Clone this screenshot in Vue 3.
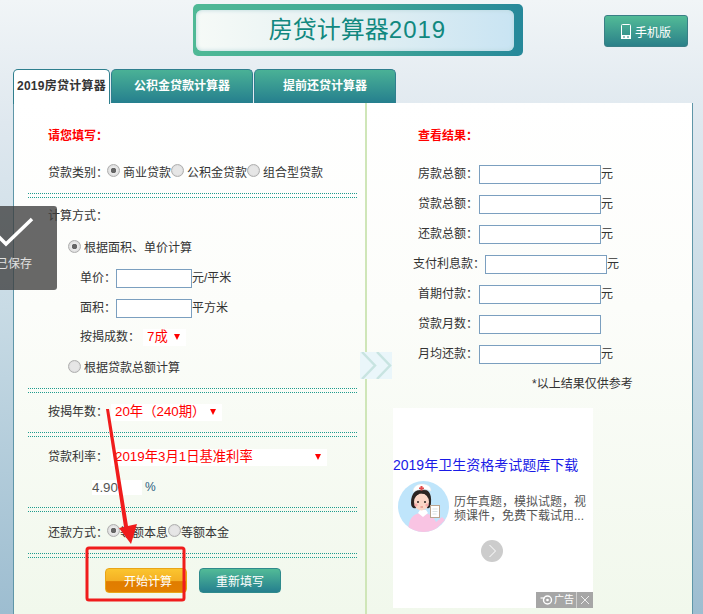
<template>
  <div class="page">
    <header class="top">
      <div class="title-frame"><h1 class="title">房贷计算器<span class="year">2019</span></h1></div>
      <button class="mobile-btn" type="button">
        <svg class="phone" viewBox="0 0 10 15" width="10" height="15" aria-hidden="true">
          <rect x="0.5" y="0.5" width="9" height="14" rx="1" fill="none" stroke="#fff" />
          <rect x="0" y="11" width="10" height="4" fill="#fff" />
          <rect x="2" y="12.5" width="2" height="1" fill="#2f8a8c" />
          <rect x="6" y="12.5" width="2" height="1" fill="#2f8a8c" />
        </svg>
        手机版
      </button>
    </header>

    <nav class="tabs">
      <div v-for="(t, i) in tabs" :key="t" class="tab" :class="{ active: i === 0 }">{{ t }}</div>
    </nav>

    <main class="panel">
      <section class="col left">
        <div class="heading">请您填写：</div>

        <div class="line type-row">
          <span class="lbl">贷款类别：</span>
          <label v-for="o in loanTypes" :key="o" class="opt">
            <input v-model="loanType" class="radio" type="radio" :value="o" />{{ o }}
          </label>
        </div>
        <div class="rule r1"></div>

        <div class="line method">计算方式：</div>
        <label class="line calc-opt c1">
          <input v-model="calc" class="radio" type="radio" value="a" />根据面积、单价计算
        </label>
        <div class="line sub"><span class="sub-lbl">单价：</span><input class="field short" type="text" />元/平米</div>
        <div class="line sub"><span class="sub-lbl">面积：</span><input class="field short" type="text" />平方米</div>
        <div class="line sub ratio">
          <span class="ratio-lbl">按揭成数：</span>
          <div class="pick pick-ratio"><span>7成</span><i class="tri"></i></div>
        </div>
        <label class="line calc-opt c2">
          <input v-model="calc" class="radio" type="radio" value="b" />根据贷款总额计算
        </label>
        <div class="rule r2"></div>

        <div class="line years">
          <span class="lbl">按揭年数：</span>
          <div class="pick pick-years"><span>20年（240期）</span><i class="tri"></i></div>
        </div>
        <div class="rule r1"></div>

        <div class="line rate">
          <span class="lbl">贷款利率：</span>
          <div class="pick pick-rate"><span>2019年3月1日基准利率</span><i class="tri"></i></div>
        </div>
        <div class="line percent">
          <input class="rate-val" type="text" value="4.90" /><span class="pct">%</span>
        </div>
        <div class="rule r1"></div>

        <div class="line repay">
          <span class="lbl">还款方式：</span>
          <label v-for="o in repayTypes" :key="o" class="opt tight">
            <input v-model="repay" class="radio" type="radio" :value="o" />{{ o }}
          </label>
        </div>
        <div class="rule r1"></div>

        <div class="actions">
          <button class="btn orange" type="button">开始计算</button>
          <button class="btn teal" type="button">重新填写</button>
        </div>
      </section>

      <section class="col right">
        <div class="heading result-head">查看结果：</div>
        <div class="results">
          <div v-for="r in results" :key="r.label" class="line result" :class="{ wide: r.wide }">
            <span>{{ r.label }}：</span><input class="field long" type="text" />{{ r.unit }}
          </div>
        </div>
        <div class="note">*以上结果仅供参考</div>

        <aside class="ad">
          <div class="ad-title">2019年卫生资格考试题库下载</div>
          <div class="ad-body">
            <svg class="nurse" viewBox="0 0 51 51" width="51" height="51" aria-hidden="true">
              <defs><clipPath id="nurse-clip"><circle cx="25.5" cy="25.5" r="25.5" /></clipPath></defs>
              <circle cx="25.5" cy="25.5" r="25.5" fill="#bfe5fb" />
              <g clip-path="url(#nurse-clip)">
                <path d="M10 51 C10 37 16 32 24 32 C32 32 36 36 38 41 L44 36 L47 39 L37 49 L36 51 Z" fill="#f9c4e3" />
                <path d="M20 32 L25 36 L30 32 L28 29 L22 29 Z" fill="#fff" />
                <path d="M13 22 C13 11 19 8 24 8 C30 8 34 12 33 22 C33 26 31 28 29 27 L18 27 C15 28 13 26 13 22 Z" fill="#2b2320" />
                <ellipse cx="23.5" cy="21" rx="7.5" ry="8.5" fill="#fbd6c6" />
                <path d="M15 17 C18 14 22 12 26 12 C29 13 31 15 32 18 L31 12 L15 13 Z" fill="#2b2320" />
                <path d="M15 11 C15 5 20 3 24 3 C29 3 33 5 33 10 C28 8 20 8 15 11 Z" fill="#fff" stroke="#e6e6e6" stroke-width="0.5" />
                <path d="M22.5 5 h2 v1.5 h1.5 v1.5 h-1.5 v1.5 h-2 v-1.5 h-1.5 v-1.5 h1.5 Z" fill="#e24a4a" />
                <circle cx="20" cy="21" r="1" fill="#2b2320" /><circle cx="27" cy="21" r="1" fill="#2b2320" />
                <circle cx="18" cy="24" r="1.6" fill="#f7aaa8" /><circle cx="29" cy="24" r="1.6" fill="#f7aaa8" />
                <path d="M22.5 26 h2.5" stroke="#d4605a" stroke-width="0.8" />
                <rect x="32.5" y="24.5" width="9" height="12" fill="#fff" stroke="#b9a48f" />
                <path d="M34.5 28 h5 M34.5 30.5 h5 M34.5 33 h4" stroke="#c8d6d8" stroke-width="0.7" />
              </g>
            </svg>
            <p class="ad-text">历年真题，模拟试题，视频课件，免费下载试用...</p>
          </div>
          <div class="ad-next">
            <svg viewBox="0 0 22 22" width="22" height="22" aria-hidden="true">
              <path d="M8.5 5 L14.5 11 L8.5 17" fill="none" stroke="#fff" stroke-width="1" />
            </svg>
          </div>
          <div class="ad-badge">
            <span class="ad-mark">
              <svg viewBox="0 0 13 12" width="13" height="12" aria-hidden="true">
                <circle cx="7.5" cy="6" r="4" fill="none" stroke="#fff" stroke-width="1.4" />
                <circle cx="7.5" cy="6" r="1.3" fill="#fff" />
                <path d="M0.5 4 H5" stroke="#fff" stroke-width="1.2" />
              </svg>
              广告
            </span>
            <span class="ad-close">
              <svg viewBox="0 0 10 10" width="10" height="10" aria-hidden="true">
                <path d="M1 1 L9 9 M9 1 L1 9" stroke="#fff" stroke-width="0.8" />
              </svg>
            </span>
          </div>
        </aside>
      </section>

      <div class="chevrons">
        <svg viewBox="0 0 32 27" width="32" height="27" aria-hidden="true">
          <path d="M0 0 H32 V27 H0 Z" fill="#eaf6fa" />
          <path d="M2 0 L15 13.5 L2 27 M17 0 L30 13.5 L17 27" fill="none" stroke="#c8e4e1" stroke-width="2.5" />
        </svg>
      </div>
    </main>

    <div class="toast">
      <svg class="check" viewBox="0 0 50 34" width="50" height="34" aria-hidden="true">
        <path d="M2 14 L15 27 L41 2" fill="none" stroke="#fff" stroke-width="3.5" />
      </svg>
      <span class="toast-text">已保存</span>
    </div>

    <svg class="annot" viewBox="0 0 703 614" width="703" height="614" aria-hidden="true">
      <polygon points="106,409 109,409 128,526 137,524 131,544 119,528 124,527" fill="#f01c1c" />
      <rect x="87" y="548" width="97" height="52" rx="2" fill="none" stroke="#f01c1c" stroke-width="3" />
    </svg>
  </div>
</template>

<script setup>
import { ref } from 'vue'

const tabs = ['2019房贷计算器', '公积金贷款计算器', '提前还贷计算器']
const loanTypes = ['商业贷款', '公积金贷款', '组合型贷款']
const repayTypes = ['等额本息', '等额本金']
const results = [
  { label: '房款总额', unit: '元' },
  { label: '贷款总额', unit: '元' },
  { label: '还款总额', unit: '元' },
  { label: '支付利息款', unit: '元', wide: true },
  { label: '首期付款', unit: '元' },
  { label: '贷款月数', unit: '' },
  { label: '月均还款', unit: '元' }
]
const loanType = ref('商业贷款')
const calc = ref('a')
const repay = ref('等额本息')
</script>

<style scoped>
.page {
  position: relative;
  width: 703px;
  height: 614px;
  overflow: hidden;
  padding-top: 4px;
  box-sizing: border-box;
  background: linear-gradient(180deg, #f1f5f7 0%, #dfe8ef 20%, #c8dbe5 50%, #9dbdd0 100%);
  font: 12px/1.2 "Liberation Sans", "Noto Sans CJK SC", sans-serif;
  color: #333;
}
.top {
  display: flex;
  align-items: flex-start;
  height: 65px;
  padding-left: 193px;
}
.title-frame {
  width: 330px;
  height: 52px;
  box-sizing: border-box;
  padding: 6px 9px 5px 3px;
  border-radius: 5px;
  background: linear-gradient(90deg, #4fb996, #3fa596 55%, #26889a);
}
.title {
  margin: 0;
  height: 100%;
  padding-left: 5px;
  border-radius: 6px;
  background: linear-gradient(90deg, #f6faf7, #e3f0f2 50%, #c9e4f3);
  box-shadow: inset 0 0 4px #b8d8dc;
  text-align: center;
  font: 400 24px/40px "Liberation Sans", "Noto Sans CJK SC", sans-serif;
  color: #11887f;
}
.year { letter-spacing: 1px; }
.mobile-btn {
  display: flex;
  align-items: center;
  justify-content: center;
  gap: 4px;
  width: 84px;
  height: 32px;
  margin: 11px 0 0 81px;
  padding: 0;
  border: 1px solid #3a7f86;
  border-radius: 3px;
  background: linear-gradient(180deg, #52bb97, #2b8089);
  color: #fff;
  font: 12px "Liberation Sans", "Noto Sans CJK SC", sans-serif;
}
.tabs {
  display: flex;
  gap: 1px;
  height: 34px;
  padding-left: 13px;
}
.tab {
  width: 142px;
  box-sizing: border-box;
  border: 1px solid #2f7f8e;
  border-bottom: 0;
  border-radius: 5px 5px 0 0;
  background: linear-gradient(180deg, #4ab196, #257f8e);
  color: #fff;
  font-weight: 700;
  line-height: 33px;
  text-align: center;
}
.tab.active {
  position: relative;
  z-index: 1;
  width: 97px;
  height: 35px;
  background: #fff;
  color: #333;
  white-space: nowrap;
  letter-spacing: 0.25px;
}
.panel {
  position: relative;
  display: flex;
  width: 680px;
  height: 511px;
  margin-left: 13px;
  box-sizing: border-box;
  border-left: 1px solid #5f96a8;
  border-right: 1px solid #5f96a8;
  background: linear-gradient(180deg, #fff 0%, #fcfdfa 40%, #f1f8ec 100%);
}
.col { box-sizing: border-box; }
.left { width: 351px; padding: 23px 0 0 14px; }
.right {
  flex: 1;
  padding-top: 23px;
  border-left: 2px solid #cfe6b8;
}
.heading {
  height: 20px;
  margin-left: 20px;
  color: #f00;
  font-size: 12px;
  font-weight: 700;
  line-height: 20px;
}
.line {
  display: flex;
  align-items: center;
  box-sizing: border-box;
  padding-top: 2px;
  white-space: nowrap;
}
.lbl { width: 59px; flex: none; margin-left: 20px; }
.rule {
  height: 5px;
  width: 330px;
  background:
    repeating-linear-gradient(90deg, #1f9c8e 0 1px, transparent 1px 2px) top left / 100% 1px no-repeat,
    repeating-linear-gradient(90deg, #1f9c8e 0 1px, transparent 1px 2px) bottom left / 100% 1px no-repeat;
}
.rule.r1 { margin-top: 9px; }
.rule.r2 { margin-top: 6px; }
.type-row { height: 24px; margin-top: 14px; }
.opt { display: inline-flex; align-items: center; }
.radio {
  appearance: none;
  width: 13px;
  height: 13px;
  margin: -4px 3px 0 0;
  flex: none;
  border: 1px solid #aeaeae;
  border-radius: 50%;
  background: radial-gradient(circle, #e6e6e6 50%, #cdcdcd 100%);
  box-sizing: border-box;
}
.radio:checked {
  background: radial-gradient(circle, #666 0 2.5px, #ececec 3px, #cfcfcf 100%);
}
.method { height: 20px; margin: 7px 0 0 20px; }
.calc-opt { height: 30px; margin-left: 40px; }
.calc-opt .radio { margin-right: 3px; }
.c1 { margin-top: 7px; }
.c2 { margin-top: 2px; }
.sub { height: 30px; margin-left: 52px; }
.sub-lbl { width: 36px; flex: none; }
.field {
  height: 19px;
  padding: 0;
  box-sizing: border-box;
  border: 1px solid #7b9fbf;
  background: #fff;
}
.short { width: 76px; }
.long { width: 122px; }
.ratio { height: 28px; }
.ratio-lbl { width: 63px; flex: none; }
.pick {
  display: flex;
  align-items: center;
  justify-content: space-between;
  height: 17px;
  box-sizing: border-box;
  padding: 0 6px 0 4px;
  background: #fff;
  color: #f00;
  font-size: 13.33px;
}
.pick-ratio { width: 43px; }
.pick-years { width: 111px; }
.pick-rate { width: 216px; }
.tri {
  width: 0;
  height: 0;
  border-left: 3px solid transparent;
  border-right: 3px solid transparent;
  border-top: 6px solid #f00;
}
.years { height: 24px; margin-top: 6px; }
.years .lbl, .rate .lbl { width: 63px; }
.rate { height: 24px; margin-top: 7px; }
.percent { height: 24px; margin: 6px 0 0 64px; }
.rate-val {
  width: 50px;
  height: 15px;
  padding: 0;
  border: 0;
  background: #fff;
  color: #555;
  font: 13.33px "Liberation Sans", sans-serif;
}
.pct { margin-left: 3px; color: #2c5d80; }
.repay { height: 24px; margin-top: 8px; }
.tight .radio { margin-right: 0; }
.actions { display: flex; gap: 12px; margin: 10px 0 0 77px; }
.btn {
  width: 82px;
  height: 25px;
  padding: 0;
  border-radius: 4px;
  color: #fff;
  font: 12px "Liberation Sans", "Noto Sans CJK SC", sans-serif;
}
.orange {
  padding-left: 4px;
  border: 1px solid #e9a517;
  background: linear-gradient(180deg, #fbc52f 0%, #f4b024 50%, #e07c00 55%, #e38000 100%);
}
.teal {
  border: 1px solid #2f8a8c;
  background: linear-gradient(180deg, #52bb97, #257f8e);
}
.result-head { margin-left: 51px; }
.results { margin-top: 12px; }
.result { height: 30px; padding-left: 51px; }
.result span { width: 61px; flex: none; }
.result.wide { padding-left: 46px; }
.result.wide span { width: 72px; }
.note {
  height: 30px;
  margin: 1px 0 0 165px;
  line-height: 30px;
}
.ad {
  position: relative;
  width: 200px;
  height: 200px;
  margin: 9px 0 0 26px;
  background: #fff;
}
.ad-title {
  padding-top: 49px;
  color: #1a1ae6;
  font-size: 14px;
  line-height: 16px;
  white-space: nowrap;
}
.ad-body {
  display: flex;
  align-items: center;
  gap: 5px;
  margin: 8px 0 0 5px;
}
.nurse { flex: none; }
.ad-text {
  width: 133px;
  margin: 5px 0 0;
  color: #555;
  font-size: 12px;
  line-height: 14px;
}
.ad-next {
  position: absolute;
  left: 88px;
  top: 132px;
  width: 22px;
  height: 22px;
  border-radius: 50%;
  background: #ccc;
}
.ad-next svg { display: block; }
.ad-badge {
  position: absolute;
  right: 0;
  bottom: 0;
  display: flex;
  height: 16px;
  background: #a6a6a6;
  color: #fff;
  font-size: 10px;
  line-height: 16px;
}
.ad-mark {
  display: flex;
  align-items: center;
  gap: 1px;
  width: 41px;
  padding-left: 4px;
  box-sizing: border-box;
  border-right: 1px solid #d0d0d0;
}
.ad-close {
  display: flex;
  align-items: center;
  justify-content: center;
  width: 16px;
}
.chevrons {
  position: absolute;
  left: 346px;
  top: 249px;
  height: 27px;
}
.chevrons svg { display: block; }
.toast {
  position: absolute;
  left: 0;
  top: 206px;
  width: 57px;
  height: 84px;
  border-radius: 0 3px 3px 0;
  background: rgba(62, 62, 62, 0.78);
}
.check { position: absolute; left: -9px; top: 11px; }
.toast-text {
  position: absolute;
  left: -4px;
  top: 51px;
  color: #e0e0e0;
  white-space: nowrap;
}
.annot {
  position: absolute;
  left: 0;
  top: 0;
  pointer-events: none;
}
</style>

<style>
html, body { margin: 0; }
</style>
